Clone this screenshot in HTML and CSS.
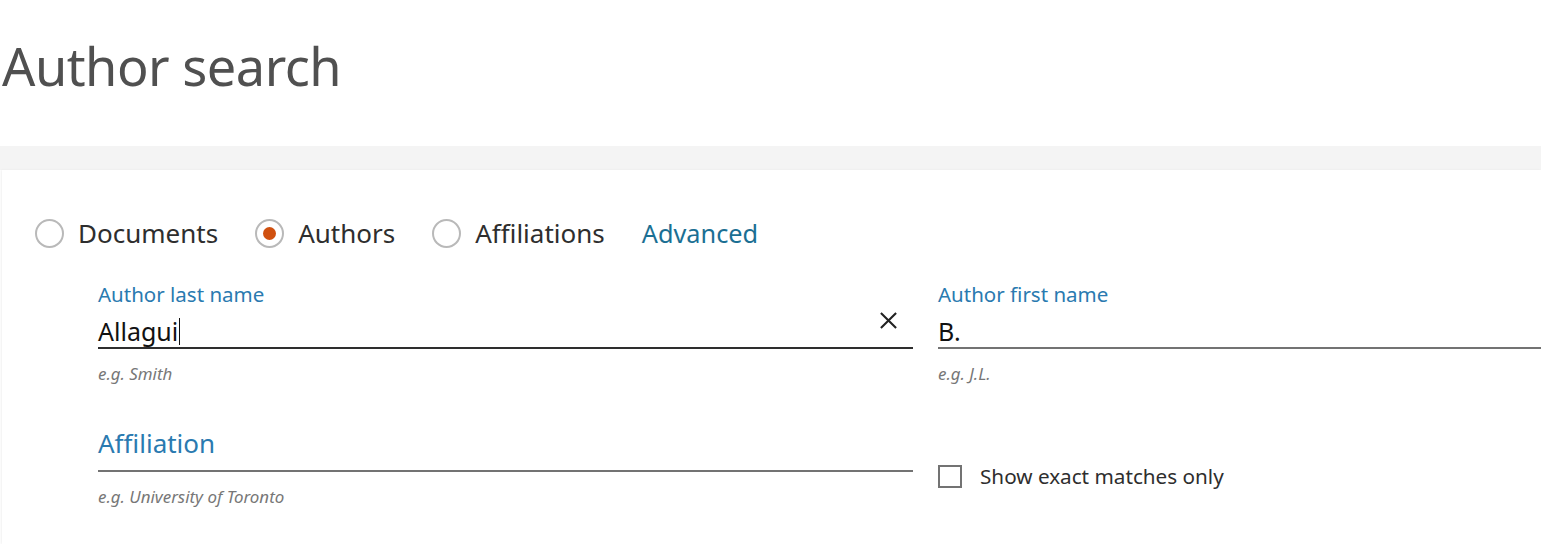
FILE: index.html
```html
<!DOCTYPE html>
<html>
<head>
<meta charset="utf-8">
<link rel="stylesheet" href="styles.css">
</head>
<body>
<h1 class="title">Author search</h1>
<div class="band"></div>
<div class="card">
  <div class="tabs">
    <label class="radio"><span class="circle"></span><span>Documents</span></label>
    <label class="radio"><span class="circle on"></span><span>Authors</span></label>
    <label class="radio"><span class="circle"></span><span>Affiliations</span></label>
    <a class="adv">Advanced</a>
  </div>
  <div class="grid">
    <div class="field">
      <div class="label">Author last name</div>
      <div class="input focus"><span class="val">Allagui<span class="caret"></span></span>
        <svg class="clear" width="20" height="20" viewBox="0 0 20 20"><path d="M2 2L18 18M18 2L2 18" stroke="#222" stroke-width="2.2" fill="none"/></svg>
      </div>
      <div class="hint">e.g. Smith</div>
    </div>
    <div class="field">
      <div class="label">Author first name</div>
      <div class="input"><span class="val">B.</span></div>
      <div class="hint">e.g. J.L.</div>
    </div>
    <div class="field aff">
      <div class="label"></div>
      <div class="input"><span class="ph">Affiliation</span></div>
      <div class="hint">e.g. University of Toronto</div>
    </div>
    <div class="check">
      <span class="box"></span><span>Show exact matches only</span>
    </div>
  </div>
</div>
</body>
</html>
```
FILE: styles.css
```css
html, body { margin: 0; padding: 0; background: #fff; overflow: hidden; }
body { font-family: "Noto Sans", "Open Sans", sans-serif; color: #2e2e2e; width: 1541px; height: 544px; }
.title { margin: 0; padding: 28px 0 0 2px; height: 146px; box-sizing: border-box; font-weight: 400; font-size: 52.3px; line-height: 76px; color: #505050; letter-spacing: -0.5px; }
.band { height: 24px; background: #f4f4f4; }
.card { margin-left: 2px; background: #fff; box-shadow: -1px 0 2px rgba(0,0,0,0.06); padding-top: 45px; height: 374px; box-sizing: border-box; }
.tabs { display: flex; align-items: center; padding-left: 33px; height: 36px; }
.radio { display: flex; align-items: center; font-size: 26px; color: #2e2e2e; margin-right: 37px; }
.circle { width: 29px; height: 29px; border: 2px solid #b9b9b9; border-radius: 50%; box-sizing: border-box; margin-right: 14px; display: flex; align-items: center; justify-content: center; }
.circle.on::after { content: ""; width: 13px; height: 13px; border-radius: 50%; background: #d0500f; }
.adv { font-size: 25.3px; color: #1b6f93; }
.grid { display: grid; grid-template-columns: 815px 1fr; column-gap: 25px; padding-left: 96px; margin-top: 30px; }
.field { display: flex; flex-direction: column; }
.label { font-size: 20.5px; line-height: 26px; height: 26px; color: #2a7ab0; }
.input { position: relative; height: 40px; border-bottom: 2px solid #737373; display: flex; align-items: flex-end; }
.input.focus { border-bottom-color: #2e2e2e; }
.val { font-size: 25px; color: #111; line-height: 32px; display: flex; align-items: center; }
.caret { display: inline-block; width: 1px; height: 27px; background: #111; margin-left: 1px; }
.clear { position: absolute; right: 15px; top: 4px; width: 19px; height: 19px; }
.hint { font-size: 16.9px; font-style: italic; color: #777; margin-top: 15px; height: 20px; line-height: 20px; }
.aff { margin-top: 20px; }
.ph { font-size: 26px; color: #2a7ab0; line-height: 32px; padding-bottom: 11px; }
.check { display: flex; align-items: center; font-size: 20.7px; line-height: 24px; height: 24px; color: #2e2e2e; margin-top: 80px; align-self: start; }
.box { width: 24px; height: 23px; border: 2px solid #737373; box-sizing: border-box; margin-right: 18px; }
```
